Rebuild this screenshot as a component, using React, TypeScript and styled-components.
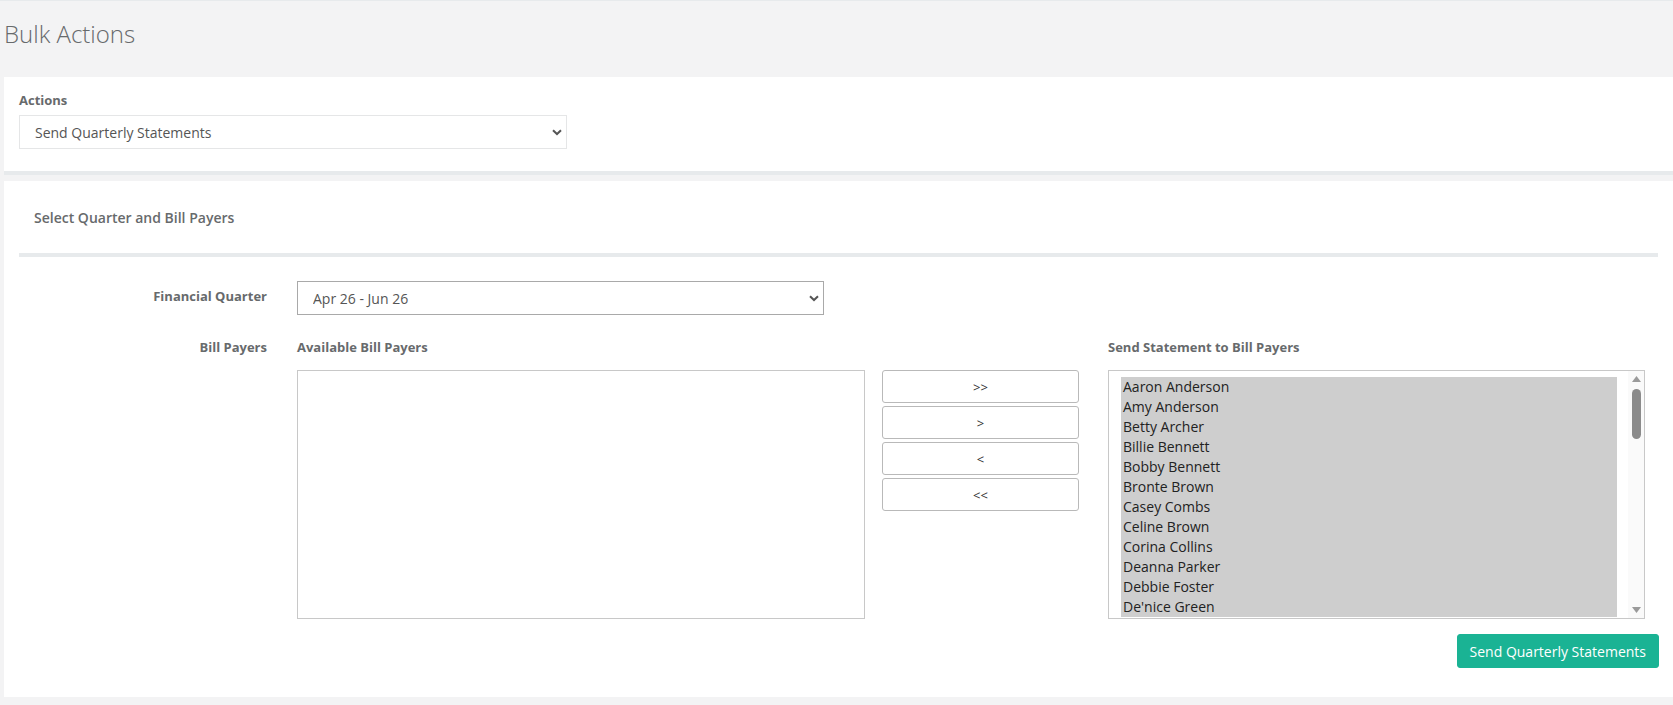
import React from "react";
import styled, { createGlobalStyle } from "styled-components";

const GlobalStyle = createGlobalStyle`
  body {
    margin: 0;
    background: #f3f3f4;
    font-family: "Open Sans", "Liberation Sans", sans-serif;
    font-size: 13px;
    color: #676a6c;
  }
  * {
    box-sizing: border-box;
  }
`;

const Page = styled.div`
  border-top: 1px solid #e7eaec;
  padding: 0 0 8px 4px;
`;

const PageHeader = styled.div`
  padding: 19px 0 29px;
  h2 {
    margin: 0;
    font-size: 24px;
    line-height: 28px;
    font-weight: 300;
    color: #676a6c;
  }
`;

const Panel = styled.div<{ $separated?: boolean }>`
  background: #ffffff;
  padding: ${(p) => (p.$separated ? "14px 15px 22px" : "0 15px 29px")};
  border-bottom: ${(p) => (p.$separated ? "4px solid #e7eaec" : "none")};
  margin-bottom: ${(p) => (p.$separated ? "6px" : "0")};
`;

const FieldLabel = styled.label<{ $right?: boolean }>`
  display: block;
  font-weight: 700;
  font-size: 13px;
  line-height: 18px;
  color: #676a6c;
  text-align: ${(p) => (p.$right ? "right" : "left")};
`;

const SelectWrap = styled.div<{ $width: number }>`
  position: relative;
  width: ${(p) => p.$width}px;
  margin-top: ${(p) => (p.$width > 540 ? "6px" : "0")};
  svg {
    position: absolute;
    right: 5px;
    top: 50%;
    margin-top: -3px;
    pointer-events: none;
  }
`;

const Select = styled.select<{ $strong?: boolean }>`
  appearance: none;
  -webkit-appearance: none;
  display: block;
  width: 100%;
  height: 34px;
  padding: 0 24px 0 15px;
  border: 1px solid ${(p) => (p.$strong ? "#a9a9a9" : "#e5e6e7")};
  border-radius: 0;
  background: #ffffff;
  font-family: "Open Sans", "Liberation Sans", sans-serif;
  font-size: 14px;
  color: #555555;
  outline: none;
`;

const SectionTitle = styled.div`
  padding: 28px 15px 26px;
  border-bottom: 4px solid #e7eaec;
  font-weight: 600;
  font-size: 14px;
  line-height: 18px;
  color: #676a6c;
`;

const FormRow = styled.div<{ $gapTop: number }>`
  display: grid;
  grid-template-columns: 248px 1fr;
  column-gap: 30px;
  margin-top: ${(p) => p.$gapTop}px;
  align-items: start;
`;

const InlineLabel = styled(FieldLabel)`
  line-height: 30px;
`;

const DualList = styled.div`
  display: grid;
  grid-template-columns: 568px 243px 537px;
`;

const ListColumn = styled.div`
  display: flex;
  flex-direction: column;
  ${FieldLabel} {
    margin-bottom: 14px;
  }
`;

const ListBox = styled.div`
  display: flex;
  height: 249px;
  border: 1px solid #c8c8c8;
  background: #ffffff;
  overflow: hidden;
`;

const OptionsPane = styled.div`
  flex: 1;
  padding: 6px 11px 0 12px;
  overflow: hidden;
`;

const Option = styled.div`
  padding: 0 2px;
  height: 20px;
  line-height: 20px;
  font-size: 14px;
  color: #222222;
  background: #cecece;
  white-space: nowrap;
`;

const ScrollBar = styled.div`
  width: 16px;
  display: flex;
  flex-direction: column;
  background: #fafafa;
`;

const ScrollArrow = styled.div`
  height: 16px;
  display: flex;
  align-items: center;
  justify-content: center;
`;

const ScrollTrack = styled.div`
  flex: 1;
  padding-top: 2px;
  display: flex;
  justify-content: center;
`;

const ScrollThumb = styled.div`
  width: 9px;
  height: 50px;
  border-radius: 5px;
  background: #8b8b8b;
`;

const MoveButtons = styled.div`
  display: flex;
  flex-direction: column;
  gap: 3px;
  width: 197px;
  margin: 32px 0 0 17px;
`;

const MoveButton = styled.button`
  height: 33px;
  border: 1px solid #b9b9b9;
  border-radius: 3px;
  background: #ffffff;
  font-family: "Open Sans", "Liberation Sans", sans-serif;
  font-size: 13px;
  color: #333333;
  cursor: pointer;
`;

const SubmitRow = styled.div`
  display: flex;
  justify-content: flex-end;
  margin-top: 15px;
  margin-right: -1px;
`;

const PrimaryButton = styled.button`
  height: 34px;
  padding: 0 12px;
  border: 1px solid #1ab394;
  border-radius: 3px;
  background: #1ab394;
  color: #ffffff;
  font-family: "Open Sans", "Liberation Sans", sans-serif;
  font-size: 14px;
  cursor: pointer;
`;

const Chevron = () => (
  <svg width="10" height="7" viewBox="0 0 10 7">
    <path d="M1 1.2 L5 5 L9 1.2" fill="none" stroke="#555" strokeWidth="2" />
  </svg>
);

const Triangle = ({ down }: { down?: boolean }) => (
  <svg width="9" height="6" viewBox="0 0 9 6">
    <path d={down ? "M0 0 H9 L4.5 6 Z" : "M0 6 H9 L4.5 0 Z"} fill="#9a9a9a" />
  </svg>
);

const billPayers = [
  "Aaron Anderson",
  "Amy Anderson",
  "Betty Archer",
  "Billie Bennett",
  "Bobby Bennett",
  "Bronte Brown",
  "Casey Combs",
  "Celine Brown",
  "Corina Collins",
  "Deanna Parker",
  "Debbie Foster",
  "De'nice Green",
];

const App = () => {
  return (
    <Page>
      <GlobalStyle />
      <PageHeader>
        <h2>Bulk Actions</h2>
      </PageHeader>

      <Panel $separated>
        <FieldLabel>Actions</FieldLabel>
        <SelectWrap $width={548}>
          <Select defaultValue="quarterly">
            <option value="quarterly">Send Quarterly Statements</option>
          </Select>
          <Chevron />
        </SelectWrap>
      </Panel>

      <Panel>
        <SectionTitle>Select Quarter and Bill Payers</SectionTitle>

        <FormRow $gapTop={24}>
          <InlineLabel $right>Financial Quarter</InlineLabel>
          <SelectWrap $width={527}>
            <Select $strong defaultValue="q1">
              <option value="q1">Apr 26 - Jun 26</option>
            </Select>
            <Chevron />
          </SelectWrap>
        </FormRow>

        <FormRow $gapTop={23}>
          <FieldLabel $right>Bill Payers</FieldLabel>
          <DualList>
            <ListColumn>
              <FieldLabel>Available Bill Payers</FieldLabel>
              <ListBox role="listbox" />
            </ListColumn>
            <MoveButtons>
              <MoveButton>&gt;&gt;</MoveButton>
              <MoveButton>&gt;</MoveButton>
              <MoveButton>&lt;</MoveButton>
              <MoveButton>&lt;&lt;</MoveButton>
            </MoveButtons>
            <ListColumn>
              <FieldLabel>Send Statement to Bill Payers</FieldLabel>
              <ListBox role="listbox">
                <OptionsPane>
                  {billPayers.map((name) => (
                    <Option key={name}>{name}</Option>
                  ))}
                </OptionsPane>
                <ScrollBar>
                  <ScrollArrow>
                    <Triangle />
                  </ScrollArrow>
                  <ScrollTrack>
                    <ScrollThumb />
                  </ScrollTrack>
                  <ScrollArrow>
                    <Triangle down />
                  </ScrollArrow>
                </ScrollBar>
              </ListBox>
            </ListColumn>
          </DualList>
        </FormRow>

        <SubmitRow>
          <PrimaryButton>Send Quarterly Statements</PrimaryButton>
        </SubmitRow>
      </Panel>
    </Page>
  );
};

export default App;
